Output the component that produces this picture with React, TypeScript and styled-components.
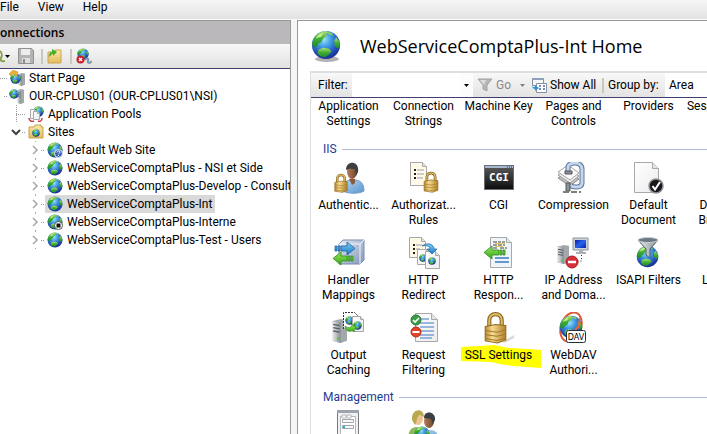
import React from "react";
import styled, { createGlobalStyle } from "styled-components";

const Global = createGlobalStyle`
  *, *::before, *::after { box-sizing: border-box; }
  body {
    margin: 0;
    background: #f0f0f0;
    color: #000;
    font-family: Roboto, "Open Sans", sans-serif;
    font-size: 12px;
    line-height: 15px;
  }
  button, input, select { font: inherit; color: inherit; }
`;

/* ---------- window frame ---------- */

const Window = styled.div`
  display: flex;
  flex-direction: column;
  height: 100vh;
  overflow: hidden;
`;

const MenuBar = styled.nav`
  display: flex;
  align-items: flex-start;
  height: 20px;
  flex: none;
  gap: 19px;
  background: linear-gradient(#f6f6f7, #e2e2e3);
  border-bottom: 1px solid #fafafa;
`;

const MenuItem = styled.button`
  padding: 0;
  line-height: 15px;
  border: 0;
  background: none;
`;

const Panes = styled.div`
  flex: 1;
  min-height: 0;
  display: grid;
  grid-template-columns: minmax(0, 291fr) minmax(0, 410fr);
  gap: 6px;
  background: #f6f6f6;
`;

const ConnectionsPane = styled.section`
  display: flex;
  flex-direction: column;
  min-width: 0;
  background: #fff;
  border: solid #949a95;
  border-width: 1px 1px 0 0;
`;

const FeaturePane = styled.main`
  display: flex;
  flex-direction: column;
  min-width: 0;
  min-height: 0;
  padding-left: 12px;
  background: #fff;
  border: solid #949a95;
  border-width: 1px 0 0 1px;
`;

/* ---------- connections ---------- */

const PaneTitle = styled.h2`
  margin: 0;
  height: 23px;
  line-height: 24px;
  font-family: "Open Sans", sans-serif;
  font-size: 12px;
  font-weight: 600;
  background: #bab8ba;
`;

const TreeToolbar = styled.div`
  display: flex;
  align-items: center;
  height: 25px;
  background: linear-gradient(#f8f8f8, #e2e1e2);
  border-bottom: 1px solid #403f6f;
`;

const ToolButton = styled.button<{ $width: number }>`
  display: flex;
  align-items: center;
  width: ${(p) => p.$width}px;
  padding: 0;
  border: 0;
  background: none;
  overflow: hidden;
`;

const Divider = styled.span<{ $gap: number }>`
  flex: none;
  width: 2px;
  height: 15px;
  margin-right: ${(p) => p.$gap}px;
  background: #c9c8ba;
`;

const Tree = styled.ul`
  list-style: none;
  margin: 0;
  padding: 0;
  overflow: hidden;
`;

const Row = styled.li<{ $indent: number }>`
  display: flex;
  align-items: center;
  height: 18px;
  padding-left: ${(p) => p.$indent}px;
  white-space: nowrap;
`;

const Toggle = styled.button<{ $line?: boolean }>`
  display: flex;
  align-items: center;
  justify-content: center;
  flex: none;
  width: 12px;
  height: 18px;
  padding: 0;
  border: 0;
  background: ${(p) =>
    p.$line ? "repeating-linear-gradient(#a8a8a8 0 1px, transparent 1px 17px) 6px 0 / 1px 18px no-repeat" : "none"};
`;

const Branch = styled.span<{ $width: number; $vertical?: boolean }>`
  flex: none;
  align-self: stretch;
  width: ${(p) => p.$width}px;
  background:
    repeating-linear-gradient(90deg, #999 0 1px, transparent 1px 2px) 0 9px / 100% 1px no-repeat
    ${(p) =>
      p.$vertical ? ", repeating-linear-gradient(#999 0 1px, transparent 1px 2px) 0 0 / 1px 100% no-repeat" : ""};
`;

const Node = styled.span<{ $selected?: boolean }>`
  display: flex;
  align-items: center;
  gap: 4px;
  height: 18px;
  padding: 0 3px 0 2px;
  background: ${(p) => (p.$selected ? "#d9d9d9" : "transparent")};
`;

/* ---------- feature view ---------- */

const Heading = styled.header`
  display: flex;
  align-items: center;
  gap: 18px;
  height: 50px;
  flex: none;
`;

const Title = styled.h1`
  margin: 0;
  font-family: "Open Sans", sans-serif;
  font-size: 18px;
  line-height: 24px;
  font-weight: 400;
  white-space: nowrap;
`;

const Frame = styled.div`
  flex: 1;
  min-height: 0;
  overflow: hidden;
  border: solid #dedede;
  border-width: 2px 0 0 1px;
`;

const FilterBar = styled.div`
  display: flex;
  align-items: center;
  height: 25px;
  background: linear-gradient(#f8f8f8, #e4e3e4);
  border-bottom: 1px solid #403f6f;
  white-space: nowrap;
`;

const FieldLabel = styled.label<{ $width: number; $pad: number }>`
  flex: none;
  width: ${(p) => p.$width}px;
  padding-left: ${(p) => p.$pad}px;
`;

const FilterInput = styled.input`
  flex: none;
  width: 108px;
  height: 24px;
  padding: 0 4px;
  border: 0;
  background: #fff;
  outline: none;
`;

const DropButton = styled.button`
  display: flex;
  align-items: center;
  justify-content: center;
  flex: none;
  width: 13px;
  height: 24px;
  padding: 0;
  border: 0;
  background: #fcfcfc;
`;

const BarButton = styled.button<{ $width: number }>`
  display: flex;
  align-items: center;
  gap: 3px;
  flex: none;
  width: ${(p) => p.$width}px;
  height: 24px;
  padding: 0 0 0 4px;
  border: 0;
  background: none;
  white-space: nowrap;

  &:disabled { color: #8a8a8a; }
`;

const ArrowSlot = styled.span`
  margin-left: 6px;
`;

const GroupSelect = styled.select`
  appearance: none;
  flex: 1;
  min-width: 0;
  height: 24px;
  padding: 0 4px;
  border: 0;
  border-radius: 0;
  background: #fff;
`;

const Grid = styled.ul`
  list-style: none;
  margin: 0;
  padding: 1px 0 0;
  display: grid;
  grid-template-columns: repeat(6, 75px);
`;

const IconGrid = styled(Grid)`
  padding-top: 3px;
`;

const Feature = styled.li<{ $short?: boolean }>`
  position: relative;
  display: flex;
  flex-direction: column;
  align-items: center;
  height: ${(p) => (p.$short ? 40 : 75)}px;
`;

const FeatureLink = styled.a`
  position: relative;
  display: flex;
  flex-direction: column;
  align-items: center;
  gap: 4px;
  color: inherit;
  text-decoration: none;
  text-align: center;
  white-space: pre;
`;

const Marker = styled.svg`
  position: absolute;
  left: 0;
  top: 33px;
  width: 80px;
  height: 26px;
`;

const GroupTitle = styled.h3`
  display: flex;
  align-items: center;
  gap: 5px;
  margin: 0;
  padding-left: 12px;
  height: 20px;
  font-size: 12px;
  font-weight: 400;
  color: #1e3a94;

  &::after {
    content: "";
    flex: 1;
    height: 1px;
    background: #b0bcdc;
  }
`;

/* ---------- drawings ---------- */

const Art = styled.svg`
  display: block;
  flex: none;
`;

const Gradients = styled.svg`
  position: absolute;
  width: 0;
  height: 0;
`;

function Palette() {
  return (
    <Gradients aria-hidden="true">
      <defs>
        <radialGradient id="sea" cx="0.42" cy="0.3" r="0.75">
          <stop offset="0" stopColor="#9fe4fb" />
          <stop offset="0.35" stopColor="#3f9be2" />
          <stop offset="0.75" stopColor="#2246b4" />
          <stop offset="1" stopColor="#152a80" />
        </radialGradient>
        <linearGradient id="land" x1="0" y1="0" x2="0" y2="1">
          <stop offset="0" stopColor="#b4e36a" />
          <stop offset="0.5" stopColor="#3fae35" />
          <stop offset="1" stopColor="#1f8a26" />
        </linearGradient>
        <linearGradient id="gold" x1="0" y1="0" x2="1" y2="0">
          <stop offset="0" stopColor="#b88a34" />
          <stop offset="0.35" stopColor="#f6dc90" />
          <stop offset="1" stopColor="#b08028" />
        </linearGradient>
        <linearGradient id="steel" x1="0" y1="0" x2="1" y2="0">
          <stop offset="0" stopColor="#eef0f2" />
          <stop offset="1" stopColor="#868c92" />
        </linearGradient>
        <linearGradient id="paper" x1="0" y1="0" x2="1" y2="1">
          <stop offset="0" stopColor="#ffffff" />
          <stop offset="1" stopColor="#ececec" />
        </linearGradient>
        <linearGradient id="cube" x1="0" y1="0" x2="1" y2="1">
          <stop offset="0" stopColor="#e4ebf5" />
          <stop offset="1" stopColor="#8296b8" />
        </linearGradient>
        <linearGradient id="blueArrow" x1="0" y1="0" x2="0" y2="1">
          <stop offset="0" stopColor="#7fd0f7" />
          <stop offset="1" stopColor="#1878c4" />
        </linearGradient>
        <linearGradient id="greenArrow" x1="0" y1="0" x2="0" y2="1">
          <stop offset="0" stopColor="#96e65a" />
          <stop offset="1" stopColor="#38a81c" />
        </linearGradient>
        <linearGradient id="shirt" x1="0" y1="0" x2="1" y2="1">
          <stop offset="0" stopColor="#b4d8f6" />
          <stop offset="1" stopColor="#5a94cc" />
        </linearGradient>
        <linearGradient id="skin" x1="0" y1="0" x2="1" y2="0">
          <stop offset="0" stopColor="#b07c58" />
          <stop offset="1" stopColor="#70462c" />
        </linearGradient>
        <linearGradient id="console" x1="0" y1="0" x2="0" y2="1">
          <stop offset="0" stopColor="#5c5c5c" />
          <stop offset="1" stopColor="#0c0c0c" />
        </linearGradient>
        <linearGradient id="folder" x1="0" y1="0" x2="0" y2="1">
          <stop offset="0" stopColor="#fbe9ac" />
          <stop offset="1" stopColor="#e3bb5a" />
        </linearGradient>
        <linearGradient id="screen" x1="0" y1="0" x2="1" y2="1">
          <stop offset="0" stopColor="#0a1cb0" />
          <stop offset="0.5" stopColor="#2a64ea" />
          <stop offset="1" stopColor="#0a1cb0" />
        </linearGradient>
      </defs>
    </Gradients>
  );
}

type Place = { x?: number; y?: number; size: number };

function Globe({ x = 0, y = 0, size }: Place) {
  return (
    <svg x={x} y={y} width={size} height={size} viewBox="0 0 32 32">
      <circle cx="16" cy="16" r="15" fill="url(#sea)" />
      <path d="M3 9C6 4 11 1 16 1l2 2-2 1 1 2-4 3-2 4-3 1-2 4-3 0-2-3zM16 2l6 1 2 3-4-1z" fill="url(#land)" />
      <path d="M8 21l5-2 6 1 3 3-3 3-4 3-5-1-3-3z" fill="url(#land)" />
      <path d="M27 8l3 4 1 5-3 3-3-4 0-5z" fill="url(#land)" />
      <path d="M5 9c2-3 4-5 8-6l-2 4-3 1z" fill="#e2f7a0" opacity="0.8" />
    </svg>
  );
}

function Padlock({ x = 0, y = 0, size }: Place) {
  return (
    <svg x={x} y={y} width={size} height={size} viewBox="0 0 32 32">
      <path d="M10 15V9C10 1 22 1 22 9V15" fill="none" stroke="#80601e" strokeWidth="4" />
      <path d="M10 15V9C10 1 22 1 22 9V15" fill="none" stroke="#dfbc62" strokeWidth="2" />
      <path d="M6 15l10-2 10 1v14l-8 3-12-2z" fill="url(#gold)" stroke="#93691c" />
      <path d="M6.500 19l11 1.500 8-2M6.500 23l11 1.500 8-2M6.500 27l11 1.500 8-2" fill="none" stroke="#a27a2a" />
    </svg>
  );
}

function Page({ x, y, w, h, fill = "url(#paper)" }: { x: number; y: number; w: number; h: number; fill?: string }) {
  const f = Math.round(w / 4);
  return (
    <g stroke="#a8a8a8" strokeLinejoin="round">
      <path d={`M${x} ${y}h${w - f}l${f} ${f}v${h - f}h${-w}z`} fill={fill} />
      <path d={`M${x + w - f} ${y}v${f}h${f}`} fill="#e4e4e4" />
    </g>
  );
}

function Tower({ x, y, w, h }: { x: number; y: number; w: number; h: number }) {
  return (
    <svg x={x} y={y} width={w} height={h} viewBox="0 0 12 22" preserveAspectRatio="none">
      <path d="M0 2l7-2 5 1v19l-5 2-7-2z" fill="#a3a8ac" />
      <path d="M0 2l7 1v19l-7-2z" fill="url(#steel)" />
      <path d="M1 5l5 1M1 8l5 1M1 11l5 1" stroke="#555b60" strokeWidth="1.200" />
      <rect x="4" y="17" width="2" height="2" fill="#4fc82e" />
    </svg>
  );
}

const Caret = ({ color = "#000" }: { color?: string }) => (
  <Art width="5" height="3" viewBox="0 0 5 3">
    <path d="M0 0h5L2.500 3z" fill={color} />
  </Art>
);

function Small({ kind }: { kind: string }) {
  return (
    <Art width="16" height="16" viewBox="0 0 16 16" aria-hidden="true">
      {kind === "start" && (
        <>
          <Tower x={9} y={3} w={7} h={13} />
          <Globe x={1} y={3} size={11} />
          <path d="M0 4l4-4 5 2-1 4H6V4L4 3 2 6z" fill="#efb135" stroke="#c88414" strokeWidth="0.500" />
        </>
      )}
      {kind === "server" && (
        <>
          <Tower x={8} y={1} w={7} h={15} />
          <Globe x={0} y={1} size={10} />
        </>
      )}
      {kind === "pools" && (
        <>
          <Globe x={5} y={0} size={11} />
          <Page x={2.5} y={3.5} w={6} h={9} />
          <Page x={5.5} y={5.5} w={6} h={8} />
          <path d="M1 12c0 3 3 4 5 3M14 12c0 3-2 4-4 3" fill="none" stroke="#cc4040" strokeWidth="1.500" />
        </>
      )}
      {kind === "sites" && (
        <>
          <path d="M1 3h5l1-2h6v2h2v11H1z" fill="url(#folder)" stroke="#c9a24a" />
          <Globe x={4} y={5} size={8} />
        </>
      )}
      {kind.startsWith("site") && kind !== "sites" && <Globe x={0} y={0} size={16} />}
      {kind === "site-unknown" && (
        <>
          <circle cx="11.500" cy="11.500" r="4" fill="#3c62b8" stroke="#e6ecf8" />
          <path d="M10 10.500c0-2 3-2 3-.3 0 1-1.500 1-1.500 2M11.500 13v1" fill="none" stroke="#fff" />
        </>
      )}
      {kind === "site-stopped" && (
        <>
          <circle cx="11.500" cy="11.500" r="4" fill="#fff" stroke="#555" />
          <path d="M9.500 9.500h4v4h-4z" fill="#111" />
        </>
      )}
      {kind === "save" && (
        <>
          <path d="M.5.500h13l2 2v13H.5z" fill="#b4b4b4" stroke="#8f8f8f" />
          <path d="M3 1h9v6H3z" fill="#ededed" />
          <path d="M4 10h8v5H4z" fill="#dedede" />
          <path d="M5 11h2v4H5z" fill="#8a8a8a" />
        </>
      )}
      {kind === "up" && (
        <>
          <path d="M1 4h6l1-2h6v13H1z" fill="url(#folder)" stroke="#caa452" />
          <path d="M2 9c0-4 1-5 3-5V1l5 3-4 4V6C4 6 4 8 2 9z" fill="#46b02a" />
        </>
      )}
      {kind === "disconnect" && (
        <>
          <Globe x={1} y={0} size={12} />
          <path d="M9 12c2-3 4-1 3 1s2 3 4 0" fill="none" stroke="#7f97a8" strokeWidth="2" />
          <circle cx="4.500" cy="11.500" r="4" fill="#c8202c" />
          <path d="M3 10l3 3M6 10l-3 3" stroke="#fff" strokeWidth="1.300" />
        </>
      )}
      {kind === "funnel" && (
        <>
          <path d="M1 2h14l-5 6v6l-4-2V8z" fill="#b6b6b6" stroke="#a2a2a2" />
          <path d="M3 3h6L7 8z" fill="#dcdcdc" />
        </>
      )}
      {kind === "showall" && (
        <>
          <path d="M1.500 1.500h11v7h-11z" fill="#f4f6f8" stroke="#8791a0" />
          <path d="M1 1h12v2H1z" fill="#8fa0b8" />
          <path d="M5.500 6.500h10v9h-10z" fill="#fff" stroke="#8791a0" />
          <path d="M8 9h2M12 9h2M8 12h2M12 12h2" stroke="#4a68a8" strokeWidth="1.500" />
          <path d="M1 8c0 2 2 2 3 2V8l4 3-4 3v-2c-2 0-3-2-3-4z" fill="#2b96d6" />
        </>
      )}
    </Art>
  );
}

function Large({ kind }: { kind: string }) {
  return (
    <Art width="32" height="32" viewBox="0 0 32 32" aria-hidden="true">
      {kind === "globe" && (
        <>
          <ellipse cx="17" cy="29" rx="12" ry="3" fill="#000" opacity="0.3" />
          <Globe x={1} y={0} size={30} />
        </>
      )}
      {kind === "authentication" && (
        <>
          <path d="M10 29c0-8 3-11 8-11 8-1 13 2 13 11-5 3-16 3-21 0z" fill="url(#shirt)" stroke="#6d9ccb" />
          <path d="M16 17h6v4l-3 2z" fill="#8a5a3a" />
          <ellipse cx="19" cy="9" rx="5" ry="8" fill="url(#skin)" />
          <path d="M13 8c0-10 14-10 12 2l-2 4-1-7c-3 0-6-1-9 1z" fill="#3b3f44" />
          <Padlock x={-2} y={11} size={20} />
        </>
      )}
      {kind === "authorization" && (
        <>
          <Page x={3.5} y={0.5} w={16} h={23} fill="#fffbe8" />
          <path d="M7 8h2M7 12h2M7 16h2" stroke="#222" strokeWidth="2" />
          <path d="M10 8h7M10 12h7M10 16h6" stroke="#9c9cae" />
          <Padlock x={13} y={9} size={22} />
        </>
      )}
      {kind === "cgi" && (
        <>
          <rect x="1.500" y="3.500" width="29" height="24" fill="url(#console)" stroke="#6a6f75" />
          <path d="M2 4h28v2H2z" fill="#a6b8d2" />
          <path d="M24 5h1M26 5h1M28 5h1" stroke="#334" />
          <text x="16" y="19" textAnchor="middle" fontFamily="DejaVu Sans Mono, monospace" fontSize="11" fontWeight="700" fill="#fff">CGI</text>
        </>
      )}
      {kind === "compression" && (
        <>
          <path d="M1 16l12 8 9-7-11-8z" fill="#c4c4c4" stroke="#888" />
          <path d="M1 13l12 8 9-7-11-8z" fill="#ececec" stroke="#999" />
          <path d="M1 10l12 8 9-7-11-8z" fill="#fafafa" stroke="#a5a5a5" />
          <path d="M11 10V5c0-5 14-6 14 2v14c0 5-9 5-12 2" fill="none" stroke="#5d7796" strokeWidth="5" />
          <path d="M11 10V5c0-5 14-6 14 2v14c0 5-9 5-12 2" fill="none" stroke="#c3d6ee" strokeWidth="3" />
          <path d="M8 9h7v3H8zM9 21h4v8H9z" fill="#8a929c" stroke="#555" />
          <path d="M6 30h18" stroke="#7e7e7e" strokeWidth="2" strokeDasharray="6 2" />
        </>
      )}
      {kind === "document" && (
        <>
          <Page x={1.5} y={0.5} w={24} h={30} />
          <circle cx="23" cy="24" r="7" fill="#17181b" stroke="#8f9499" strokeWidth="1.500" />
          <path d="M19.500 24l2.500 3.500L27 20" fill="none" stroke="#fff" strokeWidth="2" />
        </>
      )}
      {kind === "handler" && (
        <>
          <path d="M6 7l4-4h21v20l-4 4H6z" fill="url(#cube)" stroke="#7a8cab" />
          <path d="M6 7h21v20M27 7l4-4" fill="none" stroke="#f2f6fb" />
          <path d="M2 9h2v5H2zM5 9h2v5H5zM8 9h6V5l8 6.500-8 6.500v-4H8z" fill="url(#blueArrow)" stroke="#1d5f9c" strokeWidth="0.800" />
          <path d="M20 19h-2v5h2zM17 19h-2v5h2zM14 19H8v-4L0 21.500 8 28v-4h6z" fill="url(#greenArrow)" stroke="#2e8a1c" strokeWidth="0.800" />
        </>
      )}
      {kind === "redirect" && (
        <>
          <Page x={1.5} y={0.5} w={16} h={20} fill="#fff8e4" />
          <path d="M5 8h2M5 12h2M5 16h2" stroke="#222" strokeWidth="2" />
          <path d="M8 8h6M8 12h4" stroke="#9c9cae" />
          <Page x={9.5} y={12.5} w={12} h={15} />
          <Globe x={11} y={17} size={8} />
          <Page x={17.500} y={14.500} w={14} h={17} />
          <Globe x={20} y={20} size={8} />
          <path d="M14 9c5-4 12-2 12 3h3l-5 5-5-5h3c0-3-4-4-8-3z" fill="url(#blueArrow)" stroke="#2b6ea8" strokeWidth="0.800" />
        </>
      )}
      {kind === "response" && (
        <>
          <Page x={7.5} y={0.500} w={21} h={30} fill="#eef6fc" />
          <path d="M10 5h8M19 5h3M10 8h12M10 11h5M17 11h7" stroke="#4c4636" strokeDasharray="4 1" />
          <path d="M12 6.500h10M12 9.500h8" stroke="#e8c860" />
          <path d="M12 21h14M12 25h14" stroke="#3a78c0" strokeWidth="1.500" />
          <path d="M22 13h-2v5h2zM19 13h-2v5h2zM16 13H9V9L1 15.500 9 22v-4h7z" fill="url(#greenArrow)" stroke="#2e8a1c" strokeWidth="0.800" />
        </>
      )}
      {kind === "ip" && (
        <>
          <Tower x={0} y={8} w={12} h={19} />
          <path d="M16 1h15v12H16z" fill="#cdd3da" stroke="#8c949c" />
          <path d="M18 3h11v8H18z" fill="url(#screen)" />
          <path d="M22 13h4v2h3v2H19v-2h3z" fill="#a9b0b8" />
          <path d="M24.500 18v6H20" fill="none" stroke="#333" strokeDasharray="1 2" />
          <circle cx="15" cy="25" r="6" fill="#d8303a" stroke="#a81c26" />
          <path d="M11 25h8" stroke="#fff" strokeWidth="2.500" />
        </>
      )}
      {kind === "isapi" && (
        <>
          <Globe x={4} y={8} size={23} />
          <path d="M6 3l8 9v6l4 3v-9l8-9z" fill="url(#steel)" stroke="#4e5a66" />
          <ellipse cx="16" cy="3" rx="10" ry="2.500" fill="#6c7884" stroke="#c8d0d8" />
        </>
      )}
      {kind === "caching" && (
        <>
          <Tower x={0} y={7} w={15} h={24} />
          <path d="M11.500 17V.5h11l4 4" fill="#fff" stroke="#333" strokeDasharray="2 1" />
          <Globe x={13} y={4} size={9} />
          <Page x={20.500} y={4.500} w={11} h={15} />
          <Globe x={21} y={9} size={9} />
          <path d="M13 14c2 2 5 2 7 0l-1-2 5 3-2 5-1-2c-3 3-8 1-8-4z" fill="url(#greenArrow)" stroke="#2e8a1c" strokeWidth="0.600" />
        </>
      )}
      {kind === "filtering" && (
        <>
          <Page x={7.5} y={1.500} w={22} h={28} />
          <path d="M12 7h9M12 11h14M12 15h14M12 19h14M12 23h14M12 26h12" stroke="#3c76c4" />
          <circle cx="8" cy="8" r="5" fill="#3c9c4a" stroke="#2a7434" />
          <path d="M5 8l2 2 4-4" fill="none" stroke="#fff" strokeWidth="1.600" />
          <circle cx="8" cy="20" r="5" fill="#e4452c" stroke="#b42c18" />
          <path d="M4.500 20h7" stroke="#fff" strokeWidth="2" />
        </>
      )}
      {kind === "ssl" && (
        <>
          <path d="M20 30l12-7v3l-9 5z" fill="#000" opacity="0.150" />
          <Padlock x={-3} y={-1} size={33} />
        </>
      )}
      {kind === "webdav" && (
        <>
          <ellipse cx="14" cy="15" rx="10" ry="15" fill="none" stroke="#dc5a34" strokeWidth="2" transform="rotate(20 14 15)" />
          <Globe x={2} y={3} size={24} />
          <path d="M22 5c4 6 0 14-6 14l5-6z" fill="#e0683c" />
          <rect x="9.500" y="18.500" width="19" height="12" rx="2" fill="#fff" stroke="#222f38" />
          <text x="19" y="28" textAnchor="middle" fontFamily="DejaVu Sans, sans-serif" fontSize="8" fill="#000">DAV</text>
        </>
      )}
      {kind === "editor" && (
        <>
          <path d="M4.500.500h21v31h-21z" fill="#f0f1f3" stroke="#777b80" />
          <path d="M4 0h22v3H4z" fill="#9ea4ac" />
          <path d="M7.500 6.500h15v23h-15z" fill="#fff" stroke="#b2b6bc" />
          <path d="M9 5h4v3H9zM14 5h4v3h-4z" fill="#fff" stroke="#b2b6bc" />
          <path d="M9.500 9.500h11v3h-11zM9.500 15.500h11v3h-11z" fill="#f8f8f8" stroke="#a2a6ac" />
          <path d="M10 17h2" stroke="#1cb4d8" strokeWidth="2" />
        </>
      )}
      {kind === "users" && (
        <>
          <path d="M0 30c0-9 3-13 9-13l6 3v12z" fill="#8cb85a" />
          <ellipse cx="10" cy="8" rx="5" ry="7" fill="#eec494" />
          <path d="M4 10c-1-12 12-13 12-3l-4-2c-3 0-3 7-5 10z" fill="#b8a850" />
          <path d="M14 32c0-9 3-12 8-12 6 0 9 4 9 12z" fill="url(#shirt)" />
          <ellipse cx="21" cy="11" rx="5" ry="7" fill="url(#skin)" />
          <path d="M16 8c0-8 12-7 11 2l-2 4-2-5z" fill="#3b3f44" />
          <Globe x={6} y={16} size={16} />
        </>
      )}
    </Art>
  );
}

const Chevron = ({ open }: { open?: boolean }) => (
  <Art width="10" height="10" viewBox="0 0 10 10">
    <path
      d={open ? "M1 3l4 4 4-4" : "M3 1l4 4-4 4"}
      fill="none"
      stroke={open ? "#404040" : "#a6a6a6"}
      strokeWidth={open ? 2 : 1.5}
    />
  </Art>
);

/* ---------- data ---------- */

const sites = [
  { name: "Default Web Site", icon: "site-unknown" },
  { name: "WebServiceComptaPlus - NSI et Side", icon: "site" },
  { name: "WebServiceComptaPlus-Develop - Consult", icon: "site" },
  { name: "WebServiceComptaPlus-Int", icon: "site", selected: true },
  { name: "WebServiceComptaPlus-Interne", icon: "site-stopped" },
  { name: "WebServiceComptaPlus-Test - Users", icon: "site" },
];

const aspFeatures = [
  "Application\nSettings",
  "Connection\nStrings",
  "Machine Key",
  "Pages and\nControls",
  "Providers",
  "Session State",
];

const iisFeatures = [
  { label: "Authentic...", icon: "authentication" },
  { label: "Authorizat...\nRules", icon: "authorization" },
  { label: "CGI", icon: "cgi" },
  { label: "Compression", icon: "compression" },
  { label: "Default\nDocument", icon: "document" },
  { label: "Directory\nBrowsing", icon: "blank" },
  { label: "Handler\nMappings", icon: "handler" },
  { label: "HTTP\nRedirect", icon: "redirect" },
  { label: "HTTP\nRespon...", icon: "response" },
  { label: "IP Address\nand Doma...", icon: "ip" },
  { label: "ISAPI Filters", icon: "isapi" },
  { label: "Logging", icon: "blank" },
  { label: "Output\nCaching", icon: "caching" },
  { label: "Request\nFiltering", icon: "filtering" },
  { label: "SSL Settings", icon: "ssl", marked: true },
  { label: "WebDAV\nAuthori...", icon: "webdav" },
];

const managementFeatures = ["editor", "users"];

export default function App() {
  return (
    <Window>
      <Global />
      <Palette />
      <MenuBar>
        <MenuItem>File</MenuItem>
        <MenuItem>View</MenuItem>
        <MenuItem>Help</MenuItem>
      </MenuBar>
      <Panes>
        <ConnectionsPane>
          <PaneTitle>onnections</PaneTitle>
          <TreeToolbar>
            <ToolButton $width={18} aria-label="Connect">
              <Art width="5" height="16" viewBox="0 0 5 16">
                <path d="M0 3c3 3 2 5 1 7s0 4 4 3" fill="none" stroke="#88a04a" strokeWidth="2" />
              </Art>
              <Caret />
            </ToolButton>
            <ToolButton $width={23} aria-label="Save"><Small kind="save" /></ToolButton>
            <Divider $gap={4} />
            <ToolButton $width={23} aria-label="Up"><Small kind="up" /></ToolButton>
            <Divider $gap={4} />
            <ToolButton $width={18} aria-label="Disconnect"><Small kind="disconnect" /></ToolButton>
          </TreeToolbar>
          <Tree>
            <Row $indent={0}>
              <Branch $width={7} />
              <Node><Small kind="start" />Start Page</Node>
            </Row>
            <Row $indent={4}>
              <Branch $width={3} />
              <Node><Small kind="server" />OUR-CPLUS01 (OUR-CPLUS01\NSI)</Node>
            </Row>
            <Row $indent={16}>
              <Branch $width={10} $vertical />
              <Node><Small kind="pools" />Application Pools</Node>
            </Row>
            <Row $indent={10}>
              <Toggle aria-label="Collapse Sites"><Chevron open /></Toggle>
              <Branch $width={4} />
              <Node><Small kind="sites" />Sites</Node>
            </Row>
            {sites.map((s) => (
              <Row key={s.name} $indent={29}>
                <Toggle $line aria-label={`Expand ${s.name}`}><Chevron /></Toggle>
                <Branch $width={4} />
                <Node $selected={s.selected}><Small kind={s.icon} />{s.name}</Node>
              </Row>
            ))}
          </Tree>
        </ConnectionsPane>
        <FeaturePane>
          <Heading>
            <Large kind="globe" />
            <Title>WebServiceComptaPlus-Int Home</Title>
          </Heading>
          <Frame>
            <FilterBar>
              <FieldLabel htmlFor="filter" $width={41} $pad={7}>Filter:</FieldLabel>
              <FilterInput id="filter" type="text" />
              <DropButton aria-label="Filter history"><Caret /></DropButton>
              <BarButton $width={54} disabled>
                <Small kind="funnel" />Go
                <ArrowSlot><Caret color="#808080" /></ArrowSlot>
              </BarButton>
              <BarButton $width={75}><Small kind="showall" />Show All</BarButton>
              <Divider $gap={4} />
              <FieldLabel htmlFor="group" $width={57} $pad={0}>Group by:</FieldLabel>
              <GroupSelect id="group"><option>Area</option></GroupSelect>
            </FilterBar>
            <Grid>
              {aspFeatures.map((f) => (
                <Feature key={f} $short><FeatureLink href="#">{f}</FeatureLink></Feature>
              ))}
            </Grid>
            <GroupTitle>IIS</GroupTitle>
            <IconGrid>
              {iisFeatures.map((f) => (
                <Feature key={f.label}>
                  {f.marked && (
                    <Marker viewBox="0 0 80 26" aria-hidden="true">
                      <path d="M0 2l18-1 15-1 15 3 20 1 12 1v18l-14-1-14-1-13-2-9-2-30-1z" fill="#ffff00" />
                    </Marker>
                  )}
                  <FeatureLink href="#"><Large kind={f.icon} />{f.label}</FeatureLink>
                </Feature>
              ))}
            </IconGrid>
            <GroupTitle>Management</GroupTitle>
            <IconGrid>
              {managementFeatures.map((f) => (
                <Feature key={f}><Large kind={f} /></Feature>
              ))}
            </IconGrid>
          </Frame>
        </FeaturePane>
      </Panes>
    </Window>
  );
}
